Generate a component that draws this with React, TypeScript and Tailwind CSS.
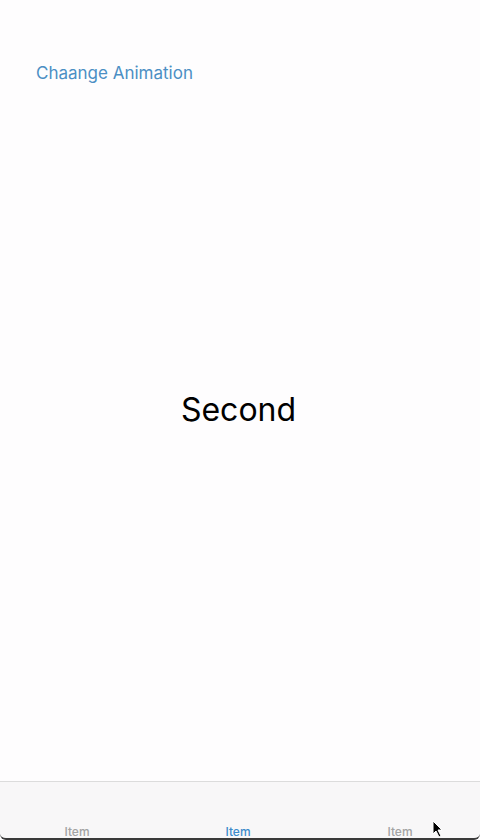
import React from 'react';

const tabs = [
  { label: 'Item', active: false },
  { label: 'Item', active: true },
  { label: 'Item', active: false },
];

export default function App() {
  return (
    <div
      className="relative w-[480px] h-[840px] bg-[#fefdfe] flex flex-col overflow-hidden"
      style={{ fontFamily: 'Inter, "Liberation Sans", Arial, sans-serif' }}
    >
      {/* header link */}
      <div className="pt-[61px] pl-[36px] h-[100px]">
        <span className="text-[17px] leading-[24px] text-[#4b8fc4]">Chaange Animation</span>
      </div>

      {/* content */}
      <div className="flex-1 flex items-center justify-center pb-[62px] pr-[3px]">
        <span className="text-[32px] text-black">Second</span>
      </div>

      {/* tab bar */}
      <div className="h-[59px] bg-[#f8f7f8] border-t border-[#dcdcdc] grid grid-cols-3 items-end pb-[1px] pl-[-2px] border-b-2 border-b-[#3a3a3a] rounded-b-[6px]">
        {tabs.map((t, i) => (
          <div
            key={i}
            className={`text-center text-[12px] leading-[10px] font-medium ${
              i === 0 ? 'pr-[6px]' : i === 1 ? 'pr-[4px]' : ''
            } ${t.active ? 'text-[#3d8bcb]' : 'text-[#a3a3a3]'}`}
          >
            {t.label}
          </div>
        ))}
      </div>

      {/* mouse cursor */}
      <svg className="absolute left-[432px] top-[820px]" width="12" height="18" viewBox="0 0 12 18">
        <path d="M1 1 L1 14 L4 11 L7 17 L9 16 L6 10 L10 10 Z" fill="#000" stroke="#fff" strokeWidth="1" />
      </svg>
    </div>
  );
}
